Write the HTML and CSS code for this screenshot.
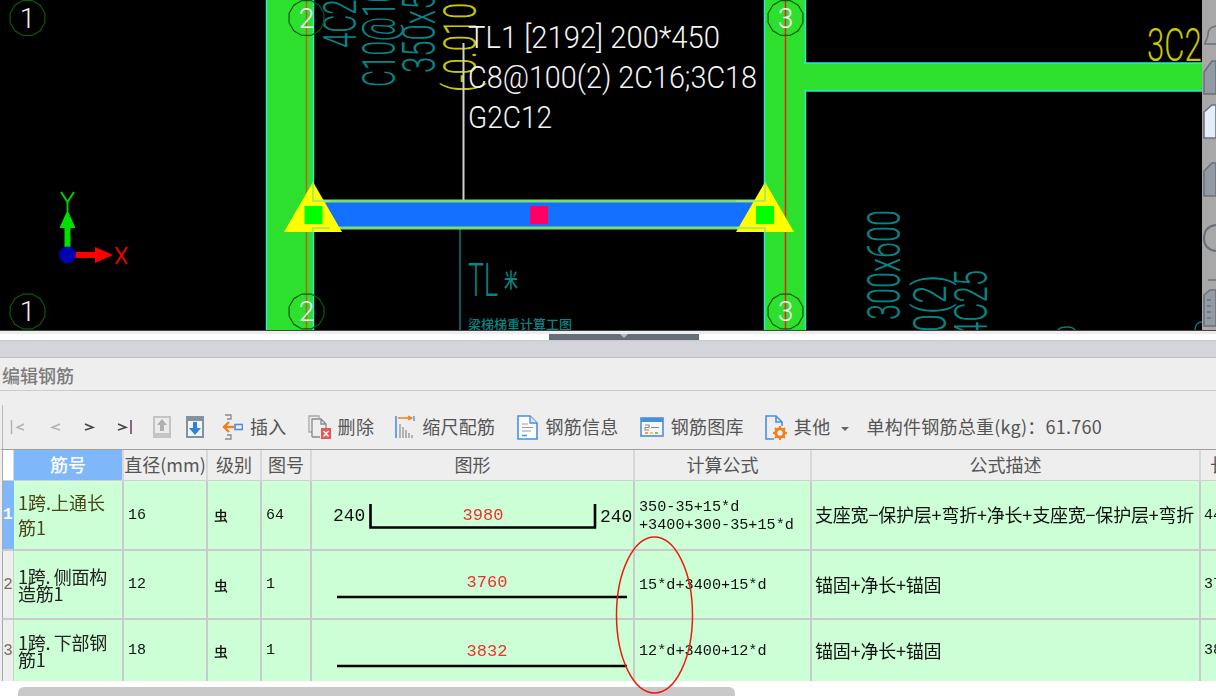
FILE: index.html
```html
<!DOCTYPE html>
<html>
<head>
   <title>编辑钢筋</title>
   <meta charset="utf-8">
   <link rel="stylesheet" href="styles.css">
</head>
<body>
   <!-- drawing area -->
   <div class="cad-view">
      <svg class="cad-canvas" width="1202" height="330" viewBox="0 0 1202 330">
         <defs>
            <polygon id="axisRing" points="17.4,4.7 12.7,12.7 4.7,17.4 -4.7,17.4 -12.7,12.7 -17.4,4.7 -17.4,-4.7 -12.7,-12.7 -4.7,-17.4 4.7,-17.4 12.7,-12.7 17.4,-4.7"/>
         </defs>

         <!-- walls -->
         <rect class="wall" x="266.5" y="-2" width="47" height="334"/>
         <rect class="wall" x="764.5" y="-2" width="41" height="334"/>
         <rect class="wall" x="805" y="63" width="400" height="28"/>
         <rect class="wall-fill" x="800" y="64" width="10" height="26"/>
         <line class="axis-red dim" x1="306.5" y1="0" x2="306.5" y2="330"/>
         <line class="axis-red" x1="785.5" y1="0" x2="785.5" y2="330"/>

         <!-- rotated labels -->
         <text class="cad-text teal" transform="translate(356,48) rotate(-90)" textLength="64" lengthAdjust="spacingAndGlyphs">4C25</text>
         <text class="cad-text teal" transform="translate(395,87) rotate(-90)" textLength="145" lengthAdjust="spacingAndGlyphs">C10@100(2)</text>
         <text class="cad-text teal" transform="translate(435,73) rotate(-90)" textLength="112" lengthAdjust="spacingAndGlyphs">350x500</text>
         <text class="cad-text yellow" transform="translate(476,92) rotate(-90)" textLength="89" lengthAdjust="spacingAndGlyphs">(-0.010</text>
         <text class="cad-text teal" transform="translate(900,320) rotate(-90)" textLength="110" lengthAdjust="spacingAndGlyphs">300x600</text>
         <text class="cad-text teal" transform="translate(946,332) rotate(-90)" textLength="57" lengthAdjust="spacingAndGlyphs">0(2)</text>
         <text class="cad-text teal" transform="translate(987,338) rotate(-90)" textLength="68" lengthAdjust="spacingAndGlyphs">4C25</text>
         <text class="cad-text yellow" x="1147" y="61" textLength="72" lengthAdjust="spacingAndGlyphs">3C20</text>
         <path class="teal-line" d="M1058 330c3-4 14-4 17 0M1195 330c0-5 3-8 7-8"/>

         <!-- leader lines -->
         <line class="leader" x1="463.5" y1="43" x2="463.5" y2="200"/>
         <line class="teal-line" x1="460" y1="210" x2="460" y2="330"/>

         <!-- beam -->
         <rect class="beam" x="313" y="201" width="452" height="27"/>
         <polygon class="support" points="313,182 284,232 342,232"/>
         <polygon class="support" points="765,182 736,232 794,232"/>
         <path class="beam-edge" d="M313 182V201H330M313 232V228H330M736 201H765V182M736 228H765V232"/>
         <rect class="node" x="304.5" y="206" width="18" height="18"/>
         <rect class="node" x="756" y="206" width="18" height="18"/>
         <rect class="node-mid" x="530" y="206" width="18" height="18"/>

         <!-- selected beam label -->
         <text class="beam-label" x="468" y="48" textLength="252" lengthAdjust="spacingAndGlyphs">TL1 [2192] 200*450</text>
         <text class="beam-label" x="468" y="88" textLength="289" lengthAdjust="spacingAndGlyphs">C8@100(2) 2C16;3C18</text>
         <text class="beam-label" x="468" y="128" textLength="84" lengthAdjust="spacingAndGlyphs">G2C12</text>

         <text class="cad-text teal" x="468" y="296" textLength="30" lengthAdjust="spacingAndGlyphs">TL</text>
         <text class="cad-small big" x="504" y="288" textLength="14" lengthAdjust="spacingAndGlyphs">米</text>
         <text class="cad-small" x="468" y="329">梁梯梯重计算工图</text>

         <!-- axis bubbles -->
         <use class="ring" href="#axisRing" x="27.5" y="18"/>
         <use class="ring" href="#axisRing" x="27.5" y="311.5"/>
         <use class="ring" href="#axisRing" x="306.5" y="18"/>
         <use class="ring" href="#axisRing" x="306.5" y="311.5"/>
         <use class="ring" href="#axisRing" x="785.5" y="18"/>
         <use class="ring" href="#axisRing" x="785.5" y="311.5"/>
         <text class="ring-num" x="27.5" y="28">1</text>
         <text class="ring-num" x="27.5" y="321">1</text>
         <text class="ring-num" x="306.5" y="28">2</text>
         <text class="ring-num" x="306.5" y="321">2</text>
         <text class="ring-num" x="785.5" y="28">3</text>
         <text class="ring-num" x="785.5" y="321">3</text>

         <!-- ucs icon -->
         <path class="ucs-green" d="M64.5 250V228H59.5L67.5 210L75.5 228H70.5V250Z"/>
         <path class="ucs-red" d="M74 252H95V247L113 255L95 263V258H74Z"/>
         <circle class="ucs-blue" cx="67.5" cy="255" r="8.5"/>
         <path class="ucs-y" d="M61 192L67.5 202L74 192M67.5 202V211"/>
         <path class="ucs-x" d="M116 247L127 264M127 247L116 264"/>
      </svg>

      <!-- tool strip, cut off by the window edge -->
      <svg class="side-strip" width="14" height="330" viewBox="0 0 14 330">
         <path class="strip-icon" d="M3 43c1-3 3-4 3-9 0-4 3-7 8-8M2 44h12"/>
         <path class="strip-icon box" d="M2 72L10 61H14V94H2Z"/>
         <path class="strip-icon sheet" d="M2 112L10 105H14V138H2Z"/>
         <path class="strip-icon box" d="M2 171L10 163H14V196H2Z"/>
         <path class="strip-icon round" d="M14 225C6 226 2 231 2 238C2 245 6 250 14 251"/>
         <line class="strip-icon" x1="6" y1="280" x2="14" y2="280"/>
         <path class="strip-icon box" d="M2 295L8 290H14V326H2ZM5 300H9M5 306H9M5 312H9M5 318H9"/>
      </svg>
   </div>

   <div class="splitter"><div class="splitter-handle"><span class="splitter-caret"></span></div></div>
   <div class="panel-gap"></div>

   <div class="panel-title">编辑钢筋</div>

   <div class="toolbar">
      <div class="tool-row">
         <div class="nav-group">
            <svg class="nav-btn" width="16" height="14" viewBox="0 0 16 14"><path class="nav-off" d="M2.5 0V14"/><path class="nav-off" d="M15 4L8 7.5L15 10"/></svg>
            <svg class="nav-btn" width="16" height="14" viewBox="0 0 16 14"><path class="nav-off" d="M15 4L7 7.5L15 10"/></svg>
            <svg class="nav-btn" width="16" height="14" viewBox="0 0 16 14"><path class="nav-on" d="M4 4L12 7.5L4 10"/></svg>
            <svg class="nav-btn" width="16" height="14" viewBox="0 0 16 14"><path class="nav-on" d="M1 4L9 7.5L1 10"/><path class="nav-bar" d="M14 0V15"/></svg>
         </div>
         <svg class="icon-up" width="18" height="22" viewBox="0 0 18 22">
            <rect x="0" y="0" width="18" height="22" fill="#c4c4c4"/>
            <rect x="2" y="2" width="14" height="15" fill="#ececec"/>
            <path d="M9 3L14 9H11V15H7V9H4Z" fill="#b0b0b0"/>
         </svg>
         <svg class="icon-down" width="18" height="22" viewBox="0 0 18 22">
            <rect x="0" y="0" width="18" height="22" fill="#84929e"/>
            <rect x="2" y="5" width="14" height="15" fill="#f2f5f8"/>
            <path d="M7 6H11V12H15L9 19L3 12H7Z" fill="#2f80da"/>
         </svg>

         <div class="tool first">
            <svg width="21" height="26" viewBox="0 0 21 26">
               <path d="M3 1H9V5H5M3 25H9V21H5" fill="none" stroke="#8a8a8a" stroke-width="1.3"/>
               <path d="M12 13H3M7 8L2 13L7 18" fill="none" stroke="#f0801e" stroke-width="2.4"/>
               <rect x="13" y="10.5" width="7.5" height="5" fill="none" stroke="#4a90d9" stroke-width="1.6"/>
            </svg>
            <span>插入</span>
         </div>
         <div class="tool">
            <svg width="23" height="24" viewBox="0 0 23 24">
               <path d="M4 17H1V1H11V3" fill="none" stroke="#a8a8a8" stroke-width="1.3"/>
               <path d="M4 22V4H13L18 9V13M4 22H12M13 4V9H18" fill="none" stroke="#8a8a8a" stroke-width="1.3"/>
               <rect x="13" y="13" width="10" height="11" fill="#e2595a"/>
               <path d="M15.5 16L20.5 21.5M20.5 16L15.5 21.5" stroke="#fff" stroke-width="1.4"/>
            </svg>
            <span>删除</span>
         </div>
         <div class="tool">
            <svg width="20" height="24" viewBox="0 0 20 24">
               <path d="M1 1V23" stroke="#4a90d9" stroke-width="1.6"/>
               <path d="M3 3H17M13 1L17 3L13 5" fill="none" stroke="#f0801e" stroke-width="1.3"/>
               <path d="M19 1V6" stroke="#4a90d9" stroke-width="1.3"/>
               <path d="M5 9V23M8 12V23M11 15V23M14 18V23M17 20V23" stroke="#9a9a9a" stroke-width="1.4"/>
            </svg>
            <span>缩尺配筋</span>
         </div>
         <div class="tool">
            <svg width="22" height="25" viewBox="0 0 22 25">
               <path d="M2 1H14L21 8V24H2Z" fill="#fafcff" stroke="#4a90d9" stroke-width="1.6"/>
               <path d="M14 1V8H21" fill="#dbe9f8" stroke="#4a90d9" stroke-width="1.3"/>
               <path d="M6 9H12M6 12.5H17M6 16H15" stroke="#9a9a9a" stroke-width="1.1"/>
               <path d="M6 20.5H11" stroke="#4a90d9" stroke-width="1.5"/>
            </svg>
            <span>钢筋信息</span>
         </div>
         <div class="tool">
            <svg width="24" height="20" viewBox="0 0 24 20">
               <rect x="1" y="1" width="22" height="18" fill="#f6f6f6" stroke="#4a90d9" stroke-width="1.6"/>
               <rect x="1" y="1" width="22" height="4" fill="#4a90d9"/>
               <path d="M5 8H9V10.5H5V13H9M11 10.5H19" fill="none" stroke="#8a8a8a" stroke-width="1.1"/>
               <rect x="5" y="15" width="3" height="2" fill="#f0a040"/>
               <rect x="10" y="15" width="3" height="2" fill="#e6d050"/>
               <rect x="15" y="15" width="3" height="2" fill="#80c080"/>
            </svg>
            <span>钢筋图库</span>
         </div>
         <div class="tool">
            <svg width="22" height="25" viewBox="0 0 22 25">
               <path d="M9 24H1V1H11L17 7V11M11 1V7H17" fill="none" stroke="#4a90d9" stroke-width="1.6"/>
               <circle cx="15" cy="18" r="4.2" fill="none" stroke="#f0801e" stroke-width="3"/>
               <path d="M15 11V14M15 22V25M8 18H11M19 18H22M10 13L12 15M18 21L20 23M20 13L18 15M12 21L10 23" stroke="#f0801e" stroke-width="2"/>
            </svg>
            <span>其他</span>
         </div>
         <span class="caret"></span>
         <span class="total">单构件钢筋总重(kg)：61.760</span>
      </div>
   </div>

   <div class="grid-wrap">
      <table class="grid">
         <colgroup>
            <col class="c-no"><col class="c-name"><col class="c-dia"><col class="c-grade"><col class="c-fig">
            <col class="c-shape"><col class="c-formula"><col class="c-desc"><col class="c-len">
         </colgroup>
         <thead>
            <tr>
               <th class="corner"></th>
               <th class="active">筋号</th>
               <th>直径(mm)</th>
               <th>级别</th>
               <th>图号</th>
               <th>图形</th>
               <th>计算公式</th>
               <th>公式描述</th>
               <th class="len-head">长度</th>
            </tr>
         </thead>
         <tbody>
            <tr class="row-first">
               <td class="no selected">1</td>
               <td class="name first-name">1跨.上通长<br>筋1</td>
               <td class="num">16</td>
               <td class="grade">虫</td>
               <td class="num">64</td>
               <td class="shape">
                  <svg width="322" height="67" viewBox="0 0 322 67">
                     <text class="dim-black" x="21" y="39">240</text>
                     <path class="bar" d="M58.5 22V45.5H283V22"/>
                     <text class="dim-red" x="171" y="38">3980</text>
                     <text class="dim-black" x="288" y="40">240</text>
                  </svg>
               </td>
               <td class="formula">350-35+15*d<br>+3400+300-35+15*d</td>
               <td class="desc">支座宽−保护层+弯折+净长+支座宽−保护层+弯折</td>
               <td class="num len">4460</td>
            </tr>
            <tr class="row">
               <td class="no">2</td>
               <td class="name spaced">1跨. 侧面构<br>造筋1</td>
               <td class="num">12</td>
               <td class="grade">虫</td>
               <td class="num">1</td>
               <td class="shape">
                  <svg width="322" height="67" viewBox="0 0 322 67">
                     <text class="dim-red" x="175" y="36">3760</text>
                     <path class="bar" d="M25 46H315"/>
                  </svg>
               </td>
               <td class="formula">15*d+3400+15*d</td>
               <td class="desc">锚固+净长+锚固</td>
               <td class="num len">3760</td>
            </tr>
            <tr class="row-last">
               <td class="no">3</td>
               <td class="name spaced">1跨. 下部钢<br>筋1</td>
               <td class="num">18</td>
               <td class="grade">虫</td>
               <td class="num">1</td>
               <td class="shape">
                  <svg width="322" height="61" viewBox="0 0 322 61">
                     <text class="dim-red" x="175" y="36">3832</text>
                     <path class="bar" d="M25 46H315"/>
                  </svg>
               </td>
               <td class="formula">12*d+3400+12*d</td>
               <td class="desc">锚固+净长+锚固</td>
               <td class="num len">3832</td>
            </tr>
         </tbody>
      </table>
   </div>

   <div class="scrollbar"><div class="scroll-thumb"></div></div>

   <!-- red ring drawn over the screenshot -->
   <svg class="markup" width="80" height="160" viewBox="0 0 80 160">
      <ellipse cx="39.5" cy="79" rx="38" ry="78"/>
   </svg>
</body>
</html>
```

FILE: styles.css
```css
* {
   box-sizing: border-box;
}
html, body {
   margin: 0;
   padding: 0;
}
body {
   position: relative;
   width: 1216px;
   height: 696px;
   overflow: hidden;
   background: #fff;
   font-family: "Noto Sans CJK SC", "Liberation Sans", sans-serif;
   font-size: 18px;
   color: #555;
   filter: blur(0.4px);
}

/* drawing */
.cad-view {
   display: flex;
   height: 331px;
   background: #000;
   border-bottom: 1px solid #444;
}
.cad-canvas {
   display: block;
   flex: none;
}
.wall {
   fill: #2ee02e;
   stroke: #2fe6d8;
   stroke-width: 1.5;
}
.wall-fill {
   fill: #2ee02e;
}
.axis-red {
   stroke: #f02010;
   stroke-width: 1.5;
}
.axis-red.dim {
   stroke: #c06020;
}
.cad-text {
   font-family: Roboto, "Liberation Sans", sans-serif;
   font-weight: 300;
   font-size: 47px;
}
.teal {
   fill: #088484;
}
.yellow {
   fill: #c8c800;
}
.teal-line {
   fill: none;
   stroke: #0a7878;
   stroke-width: 1.5;
}
.leader {
   stroke: #d0d0d0;
   stroke-width: 2;
}
.beam {
   fill: #1470ff;
   stroke: #74e070;
   stroke-width: 3;
}
.beam-edge {
   fill: none;
   stroke: #9ae870;
   stroke-width: 1.5;
}
.support {
   fill: #ffff00;
}
.node {
   fill: #00ff00;
}
.node-mid {
   fill: #ff0066;
}
.beam-label {
   font-family: Roboto, "Liberation Sans", sans-serif;
   font-weight: 300;
   font-size: 31px;
   fill: #f4f4f4;
}
.cad-small {
   font-size: 13px;
   font-weight: 500;
   fill: #088484;
}
.cad-small.big {
   font-size: 20px;
}
.ring {
   fill: none;
   stroke: #0a5a0a;
   stroke-width: 1.2;
}
.ring-num {
   font-family: Roboto, "Liberation Sans", sans-serif;
   font-weight: 300;
   font-size: 28px;
   text-anchor: middle;
   fill: #f4f4f4;
}
.ucs-green {
   fill: #00e000;
}
.ucs-red {
   fill: #ff0000;
}
.ucs-blue {
   fill: #0000b0;
}
.ucs-y {
   fill: none;
   stroke: #00d000;
   stroke-width: 2;
}
.ucs-x {
   fill: none;
   stroke: #f00000;
   stroke-width: 2;
}
.side-strip {
   display: block;
   flex: none;
   background: #a8a8a8;
}
.strip-icon {
   fill: none;
   stroke: #6a7078;
   stroke-width: 1.5;
}
.strip-icon.box {
   fill: #929aa4;
}
.strip-icon.sheet {
   fill: #e4eefa;
}
.strip-icon.round {
   stroke-width: 2;
}

/* splitter between drawing and panel */
.splitter {
   display: flex;
   justify-content: center;
   height: 10px;
   padding-left: 32px;
   background: #fff;
   border-top: 3px solid #ededed;
   border-bottom: 1px solid #c8c8cc;
}
.splitter-handle {
   display: flex;
   justify-content: center;
   width: 150px;
   background: #666e78;
}
.splitter-caret {
   width: 0;
   height: 0;
   border-left: 4px solid transparent;
   border-right: 4px solid transparent;
   border-top: 4px solid #b8bcc2;
}
.panel-gap {
   height: 17px;
   background: #d4d5da;
   border-bottom: 1px solid #c4c4c8;
}

/* panel header + toolbar */
.panel-title {
   height: 33px;
   padding-left: 2px;
   background: #eee;
   border-bottom: 1px solid #cbcbcb;
   font-weight: 500;
   line-height: 34px;
   color: #7c7c7c;
}
.toolbar {
   height: 58px;
   padding-top: 14px;
   background: #eee;
}
.tool-row {
   display: flex;
   align-items: center;
   height: 44px;
   margin-left: 2px;
   border-left: 1px solid #bbb;
}
.nav-group {
   display: flex;
   gap: 20px;
   margin-left: 6px;
   margin-right: 20px;
}
.nav-btn {
   display: block;
}
.nav-off, .nav-on, .nav-bar {
   fill: none;
   stroke-width: 1.5;
}
.nav-off {
   stroke: #b4b4b4;
}
.nav-on {
   stroke: #444;
}
.nav-bar {
   stroke: #6a3a5a;
}
.icon-up {
   margin-right: 15px;
}
.tool {
   display: flex;
   align-items: center;
   gap: 7px;
   margin-left: 21px;
   white-space: nowrap;
}
.tool span {
   margin-top: -2px;
   letter-spacing: 0.3px;
}
.tool.first {
   margin-left: 18px;
}
.caret {
   width: 0;
   height: 0;
   margin-left: 11px;
   margin-top: 3px;
   border-left: 4px solid transparent;
   border-right: 4px solid transparent;
   border-top: 4px solid #666;
}
.total {
   margin-left: 17px;
   margin-top: -2px;
   letter-spacing: 0.25px;
   white-space: nowrap;
}

/* rebar grid */
.grid-wrap {
   height: 232px;
   overflow: hidden;
   border-top: 1px solid #a0a0a0;
   border-left: 2px solid #eee;
}
.grid {
   table-layout: fixed;
   width: 1272px;
   border-collapse: separate;
   border-spacing: 0;
}
.c-no { width: 12px; }
.c-name { width: 110px; }
.c-dia { width: 84px; }
.c-grade { width: 54px; }
.c-fig { width: 50px; }
.c-shape { width: 323px; }
.c-formula { width: 177px; }
.c-desc { width: 389px; }
.c-len { width: 73px; }
.grid th {
   height: 31px;
   padding: 0 0 2px;
   background: #eee;
   border-right: 2px solid #d8d8d8;
   border-bottom: 1px solid #d0d0d0;
   font-weight: 400;
   white-space: nowrap;
   overflow: hidden;
}
.grid th.corner {
   background: #fff;
   border-left: 1px solid #aaa;
   border-right: 1px solid #d8d8d8;
}
.grid th.active {
   background: #7eb8fb;
   color: #fff;
   font-weight: 500;
}
.grid th.len-head {
   padding-left: 9px;
   text-align: left;
}
.grid td {
   padding: 0;
   background: #ccffd5;
   border-right: 2px solid #c9cbc9;
   border-bottom: 2px solid #c9cbc9;
   color: #111;
   white-space: nowrap;
   overflow: hidden;
}
.row-first td {
   height: 70px;
}
.row td {
   height: 69px;
}
.row-last td {
   height: 61px;
   border-bottom: 0;
}
.grid td.no {
   background: #eee;
   border-left: 1px solid #aaa;
   border-right: 1px solid #d0d0d0;
   font-family: "Liberation Mono", monospace;
   font-size: 16px;
   text-align: center;
   color: #7a6a5a;
}
.grid td.no.selected {
   background: #7eb8fb;
   border-right-color: #7eb8fb;
   font-weight: 700;
   color: #fff;
}
.grid td.name {
   padding-left: 4px;
   font-size: 18px;
   line-height: 17px;
   color: #222;
}
.grid td.name.spaced {
   letter-spacing: -0.3px;
}
.grid td.first-name {
   line-height: 25px;
   color: #4a4418;
}
.grid td.num {
   padding: 0 0 0 4px;
   font-family: "Liberation Mono", monospace;
   font-size: 15px;
}
.grid td.num.len {
   padding-left: 3px;
}
.grid td.grade {
   padding-left: 6px;
   font-size: 14px;
   font-weight: 500;
}
.grid td.formula {
   padding: 1px 0 0 4px;
   font-family: "Liberation Mono", monospace;
   font-size: 15.2px;
   line-height: 18px;
}
.grid td.desc {
   padding: 0 0 2px 3px;
   letter-spacing: -0.2px;
}
.shape svg {
   display: block;
}
.dim-black {
   font-family: "Liberation Mono", monospace;
   font-size: 18px;
   fill: #111;
}
.dim-red {
   font-family: "Liberation Mono", monospace;
   font-size: 17px;
   text-anchor: middle;
   fill: #f03030;
}
.bar {
   fill: none;
   stroke: #000;
   stroke-width: 2.6;
}

/* bottom scrollbar */
.scrollbar {
   height: 15px;
   padding: 6px 481px 0 18px;
   background: #fff;
}
.scroll-thumb {
   height: 9px;
   background: #c9c9c9;
   border-radius: 6px 6px 0 0;
}

.markup {
   position: absolute;
   left: 615px;
   top: 536px;
}
.markup ellipse {
   fill: none;
   stroke: #ee1c10;
   stroke-width: 1.5;
}
```
